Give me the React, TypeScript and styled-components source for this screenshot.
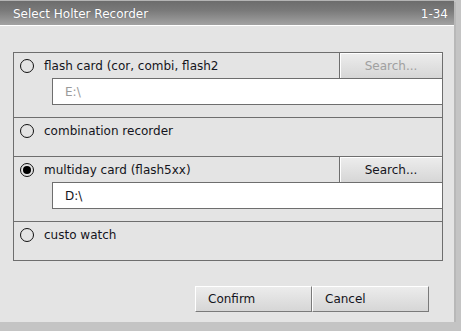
import * as React from 'react';
import { useState } from 'react';
import styled, { createGlobalStyle } from 'styled-components';

const GlobalStyle = createGlobalStyle`
  html, body {
    margin: 0;
    padding: 0;
    background: #c4c4c4;
    font-family: "DejaVu Sans", Verdana, sans-serif;
    font-size: 12px;
  }
`;

const Window = styled.div`
  width: 454px;
  height: 322px;
  background: #e4e4e4;
  box-shadow: 2px 2px 0 #b8b8b8;
  display: flex;
  flex-direction: column;
`;

const TitleBar = styled.div`
  height: 22px;
  border-top: 1px solid #b4b4b4;
  border-bottom: 1px solid #ffffff;
  background: linear-gradient(#6c6c6c, #7a7a7a 40%, #a2a2a2);
  display: flex;
  align-items: center;
  justify-content: space-between;
  padding: 2px 6px 0 13px;
  color: #ffffff;
  text-shadow: 0 0 1px rgba(60, 60, 80, 0.6);
`;

const Body = styled.div`
  padding: 26px 11px 0 13px;
  display: flex;
  flex-direction: column;
`;

const Group = styled.div`
  border: 1px solid #6e6e6e;
  display: flex;
  flex-direction: column;
`;

const Row = styled.div<{ $first: boolean; $hasPath: boolean }>`
  border-top: ${(p) => (p.$first ? 'none' : '1px solid #6e6e6e')};
  padding-bottom: ${(p) => (p.$hasPath ? 12 : 13)}px;
  display: flex;
  flex-direction: column;
`;

const RowHead = styled.div`
  height: 25px;
  display: flex;
  align-items: center;
`;

const RadioCircle = styled.span<{ $checked: boolean }>`
  width: 12px;
  height: 12px;
  margin-left: 6px;
  margin-right: 10px;
  border: 1px solid #111;
  border-radius: 50%;
  display: flex;
  align-items: center;
  justify-content: center;
  flex: none;
  &::after {
    content: '';
    width: 8px;
    height: 8px;
    border-radius: 50%;
    background: ${(p) => (p.$checked ? '#000' : 'transparent')};
  }
`;

const Label = styled.span`
  flex: 1;
  color: #141420;
  white-space: nowrap;
`;

const SearchButton = styled.button<{ $disabled: boolean }>`
  width: 103px;
  height: 25px;
  margin: 0;
  padding: 0;
  border: none;
  border-left: 1px solid #6e6e6e;
  box-shadow: inset 1px 1px 0 #ffffff;
  background: linear-gradient(#ededed, #d6d6d6);
  font-family: inherit;
  font-size: 12px;
  color: ${(p) => (p.$disabled ? '#a0a0a0' : '#141420')};
  text-align: center;
`;

const PathBox = styled.div<{ $disabled: boolean }>`
  margin-left: 38px;
  height: 25px;
  background: #ffffff;
  border-top: 1px solid #6e6e6e;
  border-bottom: 1px solid #6e6e6e;
  border-left: 1px solid #6e6e6e;
  padding-left: 12px;
  display: flex;
  align-items: center;
  color: ${(p) => (p.$disabled ? '#9a9a9a' : '#141420')};
`;

const Footer = styled.div`
  display: flex;
  justify-content: flex-end;
  padding: 25px 14px 0 0;
`;

const DialogButton = styled.button`
  width: 117px;
  height: 26px;
  margin: 0;
  padding: 0 0 0 12px;
  border: 1px solid #7a7a7a;
  border-top-color: #ffffff;
  border-left-color: #ffffff;
  background: linear-gradient(#ececec, #d6d6d6);
  font-family: inherit;
  font-size: 12px;
  color: #141420;
  text-align: left;
`;

interface Recorder {
  id: string;
  label: string;
  path?: string;
}

const recorders: Recorder[] = [
  { id: 'flash', label: 'flash card (cor, combi, flash2', path: 'E:\\' },
  { id: 'combi', label: 'combination recorder' },
  { id: 'multiday', label: 'multiday card (flash5xx)', path: 'D:\\' },
  { id: 'watch', label: 'custo watch' },
];

const App = (): React.ReactElement => {
  const [selected, setSelected] = useState('multiday');

  return (
    <>
      <GlobalStyle />
      <Window>
        <TitleBar>
          <span>Select Holter Recorder</span>
          <span>1-34</span>
        </TitleBar>
        <Body>
          <Group>
            {recorders.map((r, i) => {
              const active = selected === r.id;
              return (
                <Row key={r.id} $first={i === 0} $hasPath={!!r.path} onClick={(): void => setSelected(r.id)}>
                  <RowHead>
                    <RadioCircle $checked={active} />
                    <Label>{r.label}</Label>
                    {r.path && <SearchButton $disabled={!active}>Search...</SearchButton>}
                  </RowHead>
                  {r.path && <PathBox $disabled={!active}>{r.path}</PathBox>}
                </Row>
              );
            })}
          </Group>
          <Footer>
            <DialogButton>Confirm</DialogButton>
            <DialogButton>Cancel</DialogButton>
          </Footer>
        </Body>
      </Window>
    </>
  );
};

export default App;
